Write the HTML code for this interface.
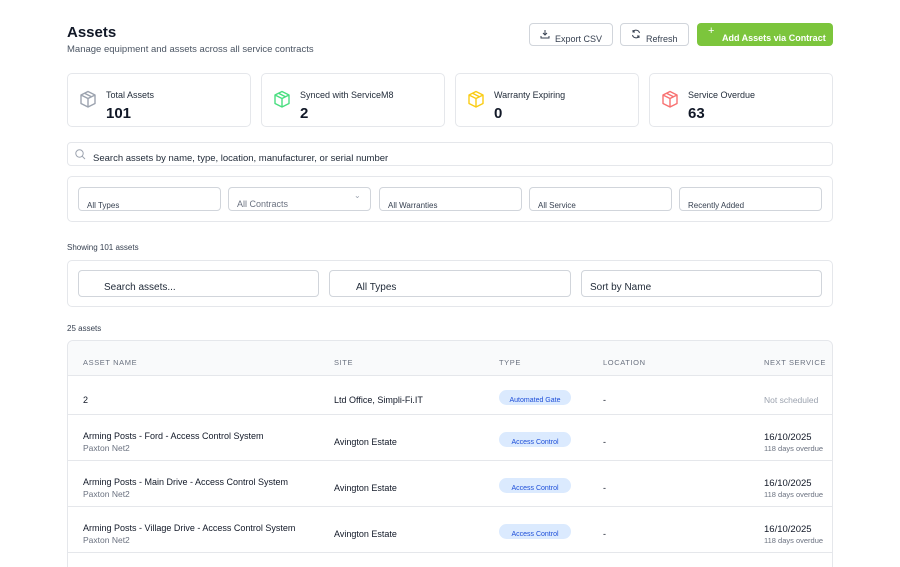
<!DOCTYPE html>
<html><head><style>
*{box-sizing:border-box;margin:0;padding:0}
html,body{width:900px;height:567px;overflow:hidden}
body{background:#fff;font-family:"Liberation Sans",sans-serif;color:#111827;position:relative}
.a{position:absolute}
.card{position:absolute;border:1px solid #e5e7eb;border-radius:5px;background:#fff}
.btn{position:absolute;border:1px solid #d1d5db;border-radius:4px;font-size:9px;color:#374151;background:#fff}
.sel{position:absolute;border:1px solid #d1d5db;border-radius:4px;overflow:hidden;font-size:8px;color:#374151}
.sel span{position:absolute;left:8px;top:11px}
.inp{position:absolute;border:1px solid #d1d5db;border-radius:4px;font-size:10px;color:#1f2937;overflow:hidden}
.lbl{font-size:9px;color:#1f2937}
.val{font-size:15px;font-weight:bold;color:#111827}
.th{position:absolute;top:358px;font-size:7.5px;letter-spacing:.6px;color:#6b7280}
.row{position:absolute;left:68px;width:764px;border-bottom:1px solid #e5e7eb}
.t{position:absolute;font-size:9px;color:#111827}
.s{position:absolute;font-size:8.5px;color:#6b7280}
.pill{position:absolute;left:499px;width:72px;height:15px;border-radius:8px;background:#dbeafe;color:#1d4ed8;font-size:7px;text-align:center;line-height:21px;overflow:hidden}
</style></head><body>
<div class="a" style="left:67px;top:24px;font-size:15px;font-weight:bold">Assets</div>
<div class="a" style="left:67px;top:44px;font-size:9.5px;color:#4b5563">Manage equipment and assets across all service contracts</div>

<div class="btn" style="left:529px;top:23px;width:84px;height:23px"><svg class="a" style="left:10px;top:5px" width="10" height="10" viewBox="0 0 10 10" fill="none" stroke="#374151" stroke-width="1"><path d="M5 1v5M3 4l2 2 2-2M1 7v2h8V7"/></svg><span class="a" style="left:25px;top:10px">Export CSV</span></div>
<div class="btn" style="left:620px;top:23px;width:69px;height:23px"><svg class="a" style="left:10px;top:5px" width="10" height="10" viewBox="0 0 10 10" fill="none" stroke="#374151" stroke-width="1"><path d="M8.5 4A3.5 3.5 0 0 0 2 3M1.5 6A3.5 3.5 0 0 0 8 7M2 1v2h2M8 9V7H6"/></svg><span class="a" style="left:25px;top:10px">Refresh</span></div>
<div class="a" style="left:697px;top:23px;width:136px;height:23px;background:#7cc53c;border-radius:4px;color:#fff;font-size:9px;font-weight:bold"><span class="a" style="left:11px;top:2px;font-size:11px;font-weight:normal">+</span><span class="a" style="left:25px;top:10px">Add Assets via Contract</span></div>

<div class="card" style="left:67px;top:73px;width:184px;height:54px"></div>
<div class="card" style="left:261px;top:73px;width:184px;height:54px"></div>
<div class="card" style="left:455px;top:73px;width:184px;height:54px"></div>
<div class="card" style="left:649px;top:73px;width:184px;height:54px"></div>
<svg class="a" style="left:79px;top:90px" width="18" height="19" viewBox="0 0 18 19" fill="none" stroke="#9ca3af" stroke-width="1.4" stroke-linejoin="round"><path d="M9 1.5l7 3.5v8.5L9 17 2 13.5V5z M2 5l7 3.5L16 5 M9 8.5V17 M5.5 3.2l7 3.6"/></svg>
<svg class="a" style="left:273px;top:90px" width="18" height="19" viewBox="0 0 18 19" fill="none" stroke="#4ade80" stroke-width="1.4" stroke-linejoin="round"><path d="M9 1.5l7 3.5v8.5L9 17 2 13.5V5z M2 5l7 3.5L16 5 M9 8.5V17 M5.5 3.2l7 3.6"/></svg>
<svg class="a" style="left:467px;top:90px" width="18" height="19" viewBox="0 0 18 19" fill="none" stroke="#facc15" stroke-width="1.4" stroke-linejoin="round"><path d="M9 1.5l7 3.5v8.5L9 17 2 13.5V5z M2 5l7 3.5L16 5 M9 8.5V17 M5.5 3.2l7 3.6"/></svg>
<svg class="a" style="left:661px;top:90px" width="18" height="19" viewBox="0 0 18 19" fill="none" stroke="#f87171" stroke-width="1.4" stroke-linejoin="round"><path d="M9 1.5l7 3.5v8.5L9 17 2 13.5V5z M2 5l7 3.5L16 5 M9 8.5V17 M5.5 3.2l7 3.6"/></svg>
<div class="a lbl" style="left:106px;top:90px">Total Assets</div><div class="a val" style="left:106px;top:105px">101</div>
<div class="a lbl" style="left:300px;top:90px">Synced with ServiceM8</div><div class="a val" style="left:300px;top:105px">2</div>
<div class="a lbl" style="left:494px;top:90px">Warranty Expiring</div><div class="a val" style="left:494px;top:105px">0</div>
<div class="a lbl" style="left:688px;top:90px">Service Overdue</div><div class="a val" style="left:688px;top:105px">63</div>

<div class="inp" style="left:67px;top:142px;width:766px;height:24px;border-color:#e5e7eb"><svg class="a" style="left:7px;top:6px" width="11" height="11" viewBox="0 0 11 11" fill="none" stroke="#9ca3af" stroke-width="1"><circle cx="4.5" cy="4.5" r="3.7"/><path d="M7.3 7.3L10 10"/></svg><span class="a" style="left:25px;top:10px;font-size:9.5px">Search assets by name, type, location, manufacturer, or serial number</span></div>

<div class="card" style="left:67px;top:176px;width:766px;height:46px"></div>
<div class="sel" style="left:78px;top:187px;width:143px;height:24px"><span style="top:13px">All Types</span></div>
<div class="sel" style="left:228px;top:187px;width:143px;height:24px"><span style="top:11px;font-size:9px;color:#6b7280">All Contracts</span><span style="left:125px;top:3px;color:#9ca3af;font-size:8px">⌄</span></div>
<div class="sel" style="left:379px;top:187px;width:143px;height:24px"><span style="top:13px">All Warranties</span></div>
<div class="sel" style="left:529px;top:187px;width:143px;height:24px"><span style="top:13px">All Service</span></div>
<div class="sel" style="left:679px;top:187px;width:143px;height:24px"><span style="top:13px">Recently Added</span></div>

<div class="a" style="left:67px;top:243px;font-size:8px;color:#374151">Showing 101 assets</div>

<div class="card" style="left:67px;top:260px;width:766px;height:47px"></div>
<div class="inp" style="left:78px;top:270px;width:241px;height:27px"><span class="a" style="left:25px;top:11px">Search assets...</span></div>
<div class="inp" style="left:329px;top:270px;width:242px;height:27px"><span class="a" style="left:26px;top:11px">All Types</span></div>
<div class="inp" style="left:581px;top:270px;width:241px;height:27px"><span class="a" style="left:8px;top:11px">Sort by Name</span></div>

<div class="a" style="left:67px;top:324px;font-size:8px;color:#374151">25 assets</div>

<div class="a" style="left:67px;top:340px;width:766px;height:240px;border:1px solid #e5e7eb;border-radius:6px 6px 0 0"></div>
<div class="a" style="left:68px;top:341px;width:764px;height:35px;background:#f9fafb;border-bottom:1px solid #e5e7eb;border-radius:6px 6px 0 0"></div>
<div class="th" style="left:83px">ASSET NAME</div>
<div class="th" style="left:334px">SITE</div>
<div class="th" style="left:499px">TYPE</div>
<div class="th" style="left:603px">LOCATION</div>
<div class="th" style="left:764px">NEXT SERVICE</div>

<div class="row" style="top:376px;height:39px"></div>
<div class="t" style="left:83px;top:395px">2</div>
<div class="t" style="left:334px;top:395px">Ltd Office, Simpli-Fi.IT</div>
<div class="pill" style="top:390px">Automated Gate</div>
<div class="t" style="left:603px;top:395px">-</div>
<div class="s" style="left:764px;top:395px;color:#9ca3af">Not scheduled</div>

<div class="row" style="top:415px;height:46px"></div>
<div class="t" style="left:83px;top:431px">Arming Posts - Ford - Access Control System</div>
<div class="s" style="left:83px;top:443px">Paxton Net2</div>
<div class="t" style="left:334px;top:437px">Avington Estate</div>
<div class="pill" style="top:432px">Access Control</div>
<div class="t" style="left:603px;top:437px">-</div>
<div class="t" style="left:764px;top:432px;font-size:9.5px">16/10/2025</div>
<div class="s" style="left:764px;top:444px;font-size:7.5px">118 days overdue</div>

<div class="row" style="top:461px;height:46px"></div>
<div class="t" style="left:83px;top:477px">Arming Posts - Main Drive - Access Control System</div>
<div class="s" style="left:83px;top:489px">Paxton Net2</div>
<div class="t" style="left:334px;top:483px">Avington Estate</div>
<div class="pill" style="top:478px">Access Control</div>
<div class="t" style="left:603px;top:483px">-</div>
<div class="t" style="left:764px;top:478px;font-size:9.5px">16/10/2025</div>
<div class="s" style="left:764px;top:490px;font-size:7.5px">118 days overdue</div>

<div class="row" style="top:507px;height:46px"></div>
<div class="t" style="left:83px;top:523px">Arming Posts - Village Drive - Access Control System</div>
<div class="s" style="left:83px;top:535px">Paxton Net2</div>
<div class="t" style="left:334px;top:529px">Avington Estate</div>
<div class="pill" style="top:524px">Access Control</div>
<div class="t" style="left:603px;top:529px">-</div>
<div class="t" style="left:764px;top:524px;font-size:9.5px">16/10/2025</div>
<div class="s" style="left:764px;top:536px;font-size:7.5px">118 days overdue</div>
</body></html>
